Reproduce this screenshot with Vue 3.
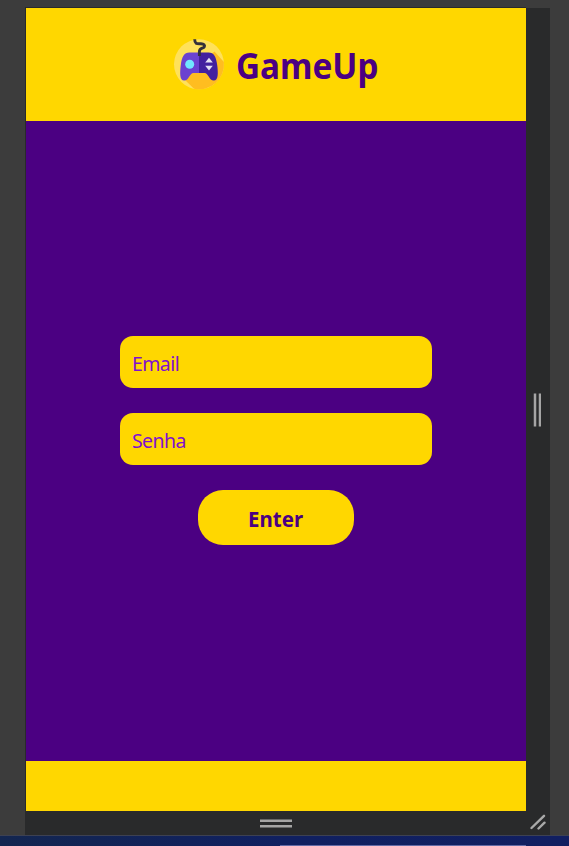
<script setup>
import { ref } from 'vue'

const email = ref('')
const password = ref('')
</script>

<template>
  <div class="desktop">
    <div class="workspace">
      <div class="frame">
        <div class="device">
          <header class="header">
            <svg class="logo" viewBox="0 0 50 50" aria-hidden="true">
              <circle cx="25" cy="25.3" r="25" fill="#ffe15a" />
              <path d="M40.5 12.5 L49.9 23 A25 25 0 0 1 20 49.8 L9 39 Z" fill="#ffbd20" />
              <path d="M25 13.5 H15.5 C10 13.5 7.8 18 6.8 26 C5.8 34 5.5 41.6 10.2 41.6 C15 41.6 15.5 34 19.5 34 H25 Z" fill="#6b42d1" />
              <path d="M25 13.5 H34.5 C40 13.5 42.2 18 43.2 26 C44.2 34 44.5 41.6 39.8 41.6 C35 41.6 34.5 34 30.5 34 H25 Z" fill="#43209f" />
              <path d="M20.7 0.3 C20.7 5.5 23.5 4.6 27 4.7 C30 4.8 31.2 6.4 30.2 8 C29.2 9.7 25.4 8.8 25.4 12.5 V17" fill="none" stroke="#35303a" stroke-width="2.9" />
              <circle cx="15.7" cy="25.2" r="4.5" fill="#70e8ff" />
              <path d="M35 18.8 L38.8 23.6 H31.2 Z M35 31.6 L38.8 26.8 H31.2 Z" fill="#e4dff3" />
            </svg>
            <h1 class="brand">GameUp</h1>
          </header>
          <main class="main">
            <form class="form" @submit.prevent>
              <input v-model="email" class="field email" type="email" placeholder="Email" />
              <input v-model="password" class="field" type="password" placeholder="Senha" />
              <button class="enter" type="submit"><span class="enter-label">Enter</span></button>
            </form>
          </main>
          <footer class="footer"></footer>
        </div>
        <div class="rail right">
          <svg width="8" height="34" viewBox="0 0 8 34"><path d="M2 0.5 V33.5 M7 0.5 V33.5" stroke="#a5a5a5" stroke-width="2.5" /></svg>
        </div>
        <div class="rail bottom">
          <svg width="32" height="9" viewBox="0 0 32 9"><path d="M0 1.8 H32 M0 7.2 H32" stroke="#a5a5a5" stroke-width="2.5" /></svg>
        </div>
        <div class="rail corner">
          <svg width="16" height="16" viewBox="0 0 16 16"><path d="M1.5 14 L14 1.8 M8.5 14.5 L14.5 8.7" stroke="#a9a9a9" stroke-width="2.4" stroke-linecap="round" /></svg>
        </div>
      </div>
    </div>
    <div class="taskbar"><div class="taskbar-edge"></div></div>
  </div>
</template>

<style>
body {
  margin: 0;
  overflow: hidden;
}
</style>

<style scoped>
.desktop {
  width: 569px;
  height: 846px;
  display: flex;
  flex-direction: column;
  background: #3c3c3c;
  font-family: "Noto Sans", "Open Sans", sans-serif;
}
.workspace {
  box-sizing: border-box;
  height: 835px;
  padding: 7px 0 0 25px;
}
.frame {
  box-sizing: border-box;
  width: 525px;
  height: 828px;
  display: grid;
  grid-template-columns: 500px 24px;
  grid-template-rows: 803px 24px;
  padding: 1px 0 0 1px;
  background: linear-gradient(#292a2b, #292a2b) 0 1px no-repeat,
    linear-gradient(#292a2b, #292a2b) 0 0 / 501px 1px no-repeat;
}
.device {
  display: flex;
  flex-direction: column;
  background: #4b0082;
}
.header {
  box-sizing: border-box;
  height: 113px;
  padding-bottom: 1px;
  display: flex;
  align-items: center;
  justify-content: center;
  gap: 12px;
  background: #ffd700;
}
.logo {
  width: 50px;
  height: 50px;
  overflow: visible;
}
.brand {
  width: 142px;
  margin: 4px 0 0;
  font-size: 35px;
  font-weight: 700;
  line-height: 48px;
  color: #4b0082;
  white-space: nowrap;
  transform: scaleX(0.95);
  transform-origin: left;
}
.main {
  flex: 1;
  display: flex;
  align-items: center;
  justify-content: center;
  padding-bottom: 1px;
}
.form {
  width: 312px;
  display: flex;
  flex-direction: column;
  align-items: center;
  gap: 25px;
}
.field {
  box-sizing: border-box;
  width: 100%;
  height: 52px;
  padding: 2px 12px 0;
  border: 0;
  border-radius: 13px;
  outline: 0;
  background: #ffd700;
  color: #4b0082;
  font-family: inherit;
  font-size: 19.5px;
  letter-spacing: -0.6px;
}
.field::placeholder {
  color: #8010d0;
  opacity: 1;
}
.enter {
  width: 156px;
  height: 55px;
  padding: 0;
  border: 0;
  border-radius: 25px;
  background: #ffd700;
  color: #4b0082;
  font-family: inherit;
  font-size: 22px;
  font-weight: 700;
}
.enter-label {
  display: inline-block;
  transform: scaleX(0.93);
}
.footer {
  height: 50px;
  background: #ffd700;
}
.rail {
  display: flex;
  align-items: center;
  justify-content: center;
  background: #292a2b;
}
.right {
  padding: 0 2px 0 0;
  box-sizing: border-box;
}
.corner {
  box-sizing: border-box;
  padding: 0 1px 2px 0;
}
.taskbar {
  box-sizing: border-box;
  height: 11px;
  padding: 9px 43px 0 280px;
  border-top: 1px solid #3d4152;
  background: linear-gradient(90deg, #132650, #102060 50%, #111f61);
}
.taskbar-edge {
  height: 1px;
  background: #626aa5;
}
</style>
